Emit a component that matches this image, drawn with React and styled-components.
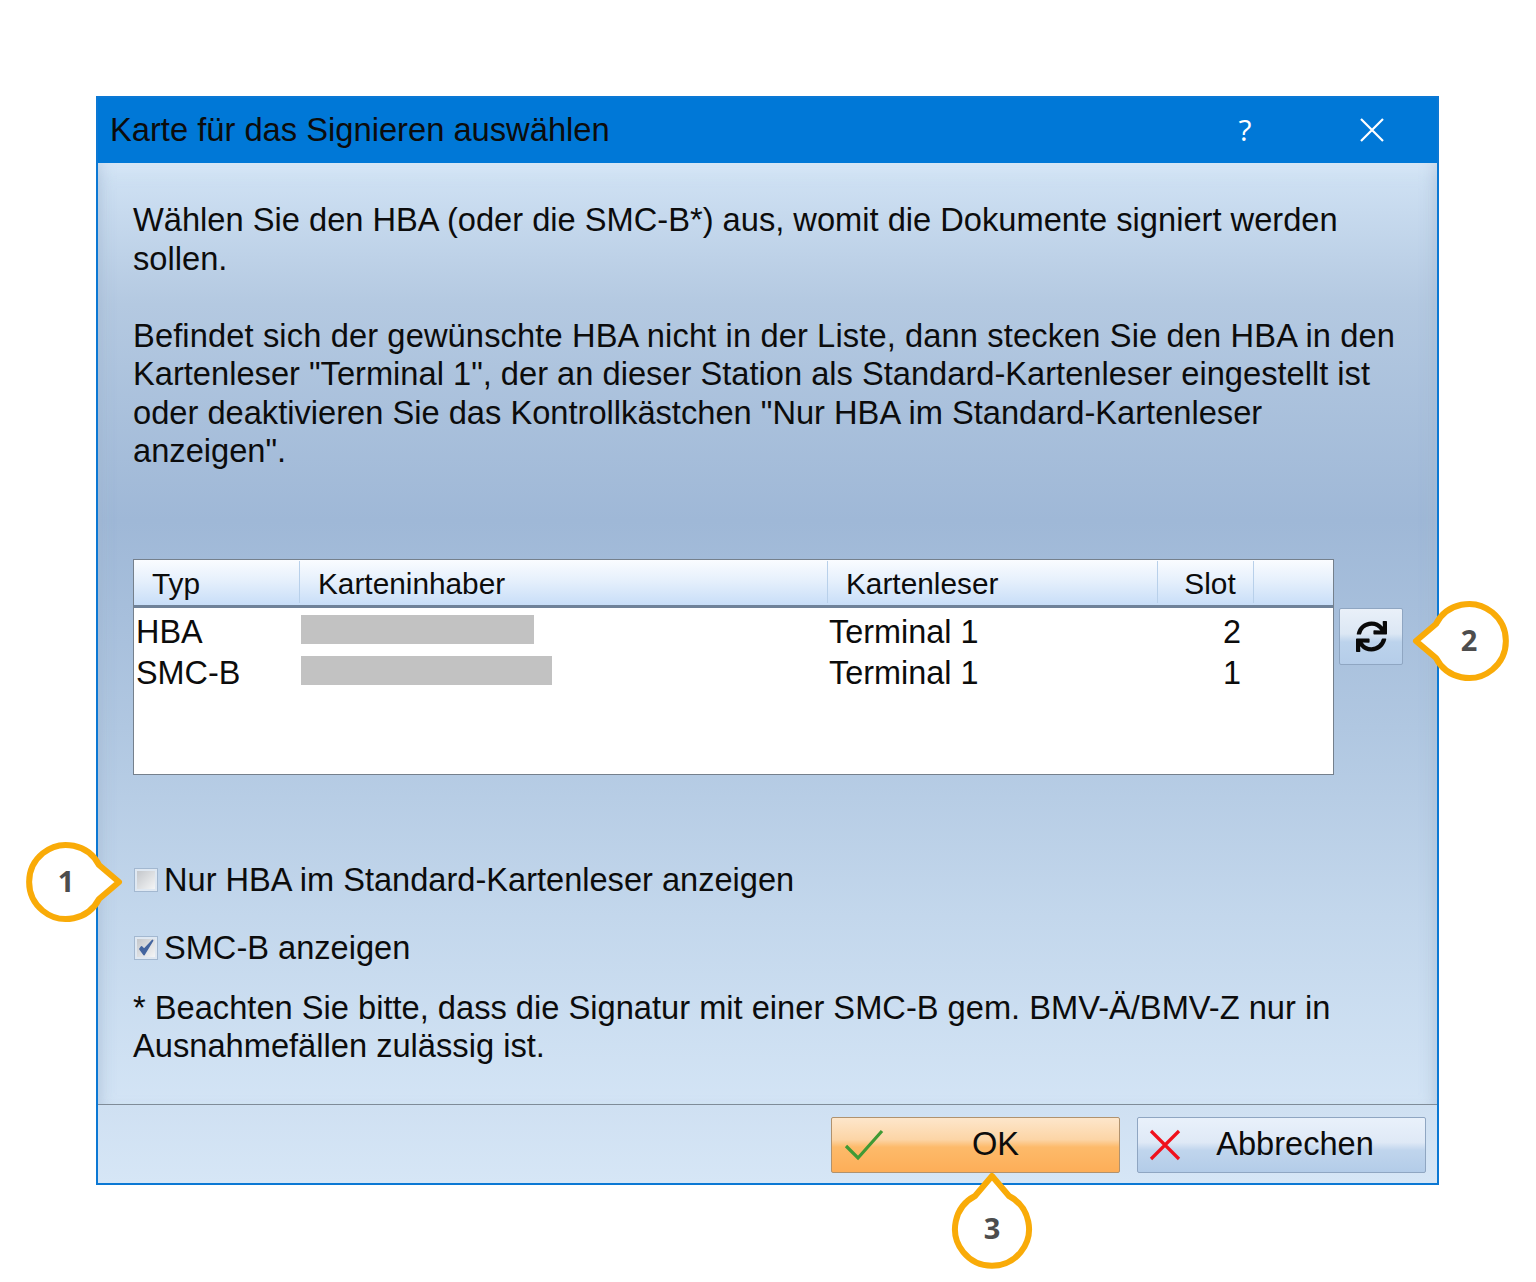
import React from 'react';
import styled, { createGlobalStyle } from 'styled-components';
import { FaSync } from 'react-icons/fa';

const GlobalStyle = createGlobalStyle`
  html, body {
    margin: 0;
    padding: 0;
    background: #fff;
  }
  body {
    font-family: "Liberation Sans", Arial, sans-serif;
    color: #0c0c0c;
  }
`;

const Page = styled.div`
  position: relative;
  width: 1536px;
  height: 1282px;
  padding: 96px 0 0 96px;
  box-sizing: border-box;
  overflow: hidden;
`;

const Dialog = styled.div`
  width: 1343px;
  height: 1089px;
  box-sizing: border-box;
  border: 2px solid #0b78d4;
  display: flex;
  flex-direction: column;
`;

const TitleBar = styled.div`
  height: 65px;
  flex: none;
  background: #0078d7;
  display: flex;
  align-items: center;
  padding: 0 52px 2px 12px;
  box-sizing: border-box;
  font-size: 32.7px;
`;

const TitleText = styled.div`
  flex: 1;
  white-space: nowrap;
`;

const HelpButton = styled.div`
  width: 30px;
  margin-right: 99px;
  text-align: center;
  color: #fff;
  font-family: "Open Sans", sans-serif;
  font-size: 30px;
`;

const Body = styled.div`
  flex: 1;
  position: relative;
  padding: 38px 33px 0 35px;
  background: linear-gradient(180deg, #d1e3f5 0%, #b4c9e1 15%, #9fb8d7 38%, #b0c7e1 60%, #c3d7ec 80%, #d3e4f5 100%);
  box-shadow: inset 0 8px 22px -8px rgba(225, 238, 250, 0.7), inset 14px 0 16px -14px rgba(120, 145, 180, 0.55), inset -14px 0 16px -14px rgba(120, 145, 180, 0.55);
`;

const Paragraph = styled.p`
  margin: 0;
  font-size: 32.65px;
  line-height: 38.5px;
  white-space: pre-line;
`;

const WideLine = styled.span`
  letter-spacing: 0.12px;
`;

const TableRow = styled.div`
  display: flex;
  align-items: flex-start;
  gap: 5px;
  margin-top: 88px;
`;

const Table = styled.div`
  width: 1201px;
  height: 216px;
  flex: none;
  box-sizing: border-box;
  border: 1px solid #75808c;
  background: #fff;
`;

const TableHead = styled.div`
  height: 48px;
  display: grid;
  grid-template-columns: 166px 528px 330px 96px 1fr;
  align-items: center;
  box-sizing: border-box;
  border-bottom: 3px solid #6f8299;
  background: linear-gradient(180deg, #fafcff 0%, #e6f0fc 45%, #c8def8 100%);
`;

const HeadCell = styled.div`
  height: 42px;
  box-sizing: border-box;
  display: flex;
  align-items: center;
  justify-content: ${props => (props.$center ? 'center' : 'flex-start')};
  padding-top: 4px;
  padding-left: ${props => (props.$center ? '9px' : '18px')};
  border-right: 1px solid ${props => (props.$last ? 'transparent' : '#b8d0ea')};
  font-size: 29.8px;
`;

const TableRows = styled.div`
  padding-top: 5px;
`;

const DataRow = styled.div`
  height: 40.5px;
  display: grid;
  grid-template-columns: 167px 528px 330px 96px 1fr;
  align-items: center;
  font-size: 32.4px;
`;

const Cell = styled.div`
  padding-left: ${props => props.$indent || 0}px;
  text-align: ${props => props.$align || 'left'};
  white-space: nowrap;
`;

const Redacted = styled.div`
  width: ${props => props.$width}px;
  height: 29px;
  margin-bottom: 6px;
  background: #c2c2c2;
`;

const RefreshButton = styled.button`
  width: 64px;
  height: 57px;
  flex: none;
  margin-top: 49px;
  padding: 0;
  display: flex;
  align-items: center;
  justify-content: center;
  color: #0a0a0a;
  border: 1px solid #8fa6c2;
  border-radius: 2px;
  background: linear-gradient(180deg, #e9f0f9 0%, #dce7f4 45%, #bcd3ec 60%, #b5cde9 100%);
`;

const CheckRow = styled.label`
  display: flex;
  align-items: center;
  gap: 6px;
  font-size: 32.6px;
  height: 38px;
  margin-top: ${props => props.$gap}px;
`;

const CheckBox = styled.span`
  width: 24px;
  height: 24px;
  flex: none;
  margin-left: 1px;
  box-sizing: border-box;
  border: 3px solid #dfe8f2;
  outline: 1px solid #a3b8d0;
  outline-offset: -1px;
  background: linear-gradient(135deg, #c4c7cb 0%, #f4f5f6 100%);
  display: flex;
  align-items: center;
  justify-content: center;
`;

const Note = styled(Paragraph)`
  margin-top: 22px;
`;

const Footer = styled.div`
  height: 79px;
  flex: none;
  box-sizing: border-box;
  border-top: 1px solid #7f8b98;
  background: linear-gradient(180deg, #cfe0f2 0%, #d6e6f6 100%);
  display: flex;
  justify-content: flex-end;
  gap: 17px;
  padding: 12px 11px 0 0;
`;

const DialogButton = styled.button`
  width: 289px;
  height: 56px;
  padding: 0;
  border: 1px solid ${props => (props.$primary ? '#b0926e' : '#8fa6c2')};
  border-radius: 2px;
  font-family: inherit;
  font-size: 32.6px;
  color: #0c0c0c;
  background: ${props =>
    props.$primary
      ? 'linear-gradient(180deg, #fde6cb 0%, #fcd5a6 40%, #fdba6a 54%, #fdae58 100%)'
      : 'linear-gradient(180deg, #e9f1fb 0%, #dfe9f6 45%, #c0d5ed 60%, #b3cce8 100%)'};
  display: flex;
  align-items: center;
`;

const ButtonIcon = styled.svg`
  width: 42px;
  height: 34px;
  flex: none;
  margin-left: ${props => props.$left}px;
`;

const ButtonLabel = styled.span`
  flex: 1;
  text-align: center;
  padding-right: ${props => props.$right}px;
  padding-bottom: 2px;
`;

const CalloutWrap = styled.div`
  position: absolute;
  left: ${props => props.$x - 60}px;
  top: ${props => props.$y - 60}px;
  width: 120px;
  height: 120px;
  box-sizing: border-box;
  padding-bottom: 4px;
  display: flex;
  align-items: center;
  justify-content: center;
  font-family: "Open Sans", sans-serif;
  font-weight: 700;
  font-size: 29px;
  color: #4d4d4d;
`;

const CalloutShape = styled.svg`
  position: absolute;
  inset: 0;
  width: 120px;
  height: 120px;
`;

const CalloutNumber = styled.span`
  position: relative;
`;

const Callout = ({ x, y, angle, children }) => (
  <CalloutWrap $x={x} $y={y}>
    <CalloutShape viewBox="-60 -60 120 120">
      <path
        transform={`rotate(${angle})`}
        d="M33 -17 L53 0 L33 17 A37 37 0 1 1 33 -17 Z"
        fill="#fff"
        stroke="#f9ab08"
        strokeWidth="6"
        strokeLinejoin="round"
      />
    </CalloutShape>
    <CalloutNumber>{children}</CalloutNumber>
  </CalloutWrap>
);

const App = () => (
  <Page>
    <GlobalStyle />
    <Dialog>
      <TitleBar>
        <TitleText>Karte für das Signieren auswählen</TitleText>
        <HelpButton>?</HelpButton>
        <svg width="26" height="26" viewBox="0 0 26 26">
          <path d="M2 2 L24 24 M24 2 L2 24" stroke="#fff" strokeWidth="2.2" fill="none" />
        </svg>
      </TitleBar>
      <Body>
        <Paragraph>
          {'Wählen Sie den HBA (oder die SMC-B*) aus, womit die Dokumente signiert werden\nsollen.\n\n'}
          <WideLine>Befindet sich der gewünschte HBA nicht in der Liste, dann stecken Sie den HBA in den</WideLine>
          {'\nKartenleser "Terminal 1", der an dieser Station als Standard-Kartenleser eingestellt ist\noder deaktivieren Sie das Kontrollkästchen "Nur HBA im Standard-Kartenleser\nanzeigen".'}
        </Paragraph>
        <TableRow>
          <Table>
            <TableHead>
              <HeadCell>Typ</HeadCell>
              <HeadCell>Karteninhaber</HeadCell>
              <HeadCell>Kartenleser</HeadCell>
              <HeadCell $center>Slot</HeadCell>
              <HeadCell $last />
            </TableHead>
            <TableRows>
              <DataRow>
                <Cell $indent={2}>HBA</Cell>
                <Redacted $width={233} />
                <Cell>Terminal 1</Cell>
                <Cell $align="center" $indent={50}>2</Cell>
              </DataRow>
              <DataRow>
                <Cell $indent={2}>SMC-B</Cell>
                <Redacted $width={251} />
                <Cell>Terminal 1</Cell>
                <Cell $align="center" $indent={50}>1</Cell>
              </DataRow>
            </TableRows>
          </Table>
          <RefreshButton>
            <FaSync size={31} />
          </RefreshButton>
        </TableRow>
        <CheckRow $gap={86}>
          <CheckBox />
          Nur HBA im Standard-Kartenleser anzeigen
        </CheckRow>
        <CheckRow $gap={30}>
          <CheckBox>
            <svg width="18" height="18" viewBox="0 0 18 18">
              <path d="M3 10 L7 15.5 L15.5 1.5 L7 10.5 L4.5 8 Z" fill="#44659f" stroke="#44659f" strokeWidth="1.8" strokeLinejoin="round" />
            </svg>
          </CheckBox>
          SMC-B anzeigen
        </CheckRow>
        <Note>
          {'* Beachten Sie bitte, dass die Signatur mit einer SMC-B gem. BMV-Ä/BMV-Z nur in\nAusnahmefällen zulässig ist.'}
        </Note>
      </Body>
      <Footer>
        <DialogButton $primary>
          <ButtonIcon $left={12} viewBox="0 0 42 34">
            <path d="M2 18 L14 30 L38 3" stroke="#3f9a35" strokeWidth="3.2" fill="none" />
          </ButtonIcon>
          <ButtonLabel $right={14}>OK</ButtonLabel>
        </DialogButton>
        <DialogButton>
          <ButtonIcon $left={6} viewBox="0 0 42 34">
            <path d="M7 3 L35 31 M35 3 L7 31" stroke="#f0101c" strokeWidth="3.2" fill="none" />
          </ButtonIcon>
          <ButtonLabel $right={21}>Abbrechen</ButtonLabel>
        </DialogButton>
      </Footer>
    </Dialog>
    <Callout x={66} y={882} angle={0}>1</Callout>
    <Callout x={1469} y={641} angle={180}>2</Callout>
    <Callout x={992} y={1229} angle={-90}>3</Callout>
  </Page>
);

export default App;
